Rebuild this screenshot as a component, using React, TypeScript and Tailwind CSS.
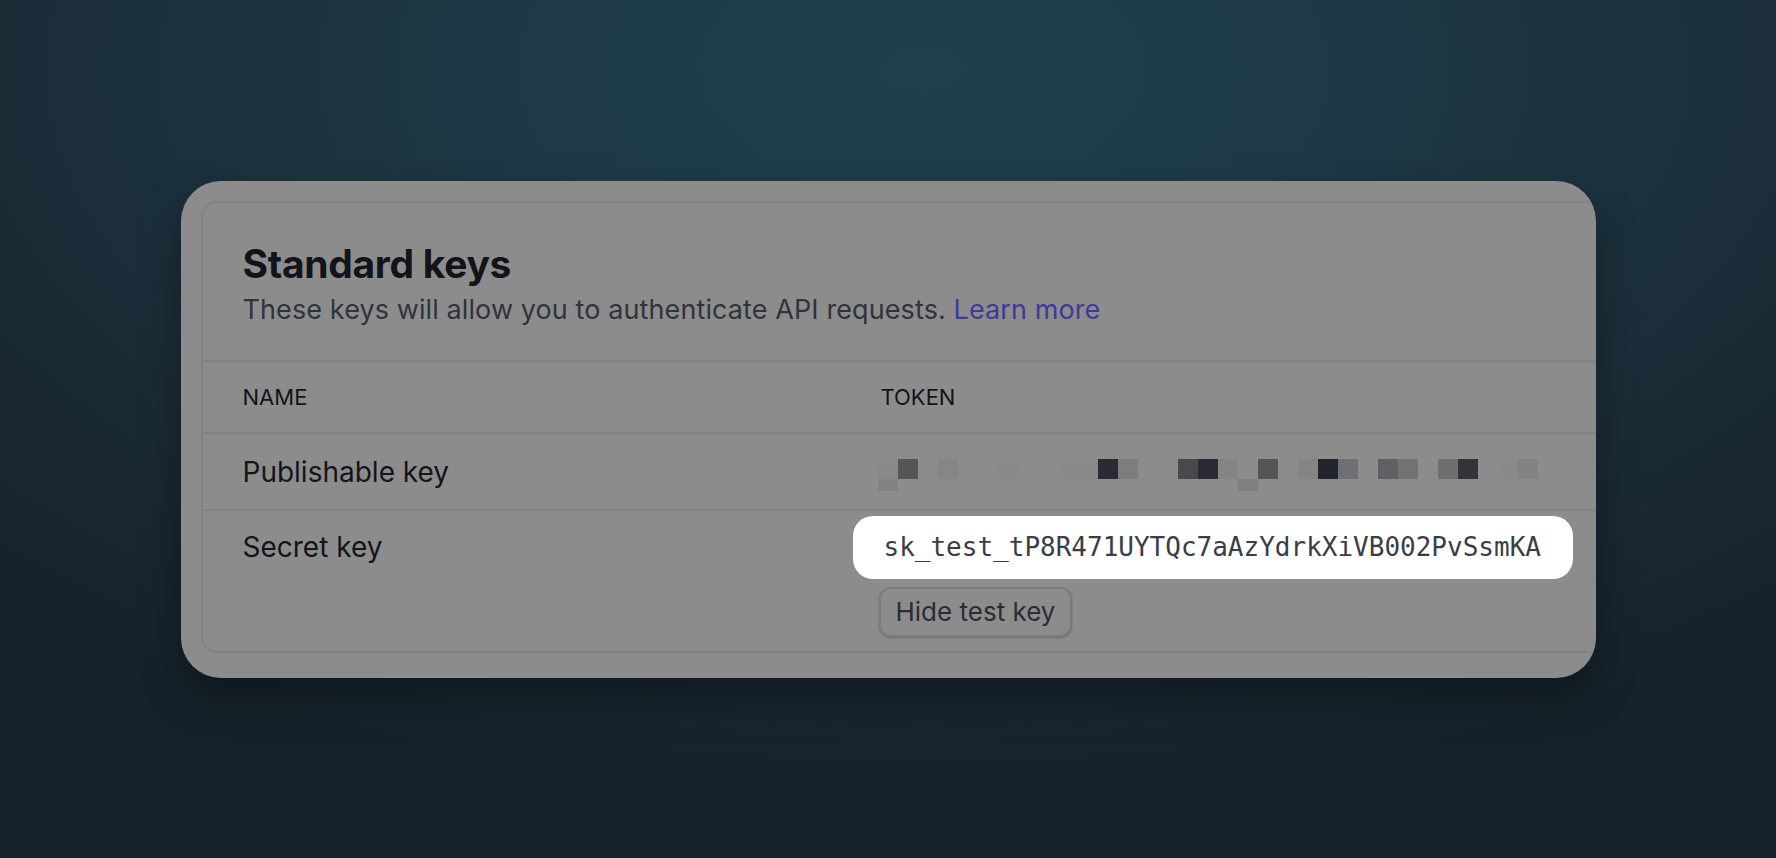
import React from "react";

const blocks: { x: number; top?: string; bottom?: string }[] = [
  { x: 0, top: "#8a8a8a", bottom: "#838383" },
  { x: 1, top: "#555657" },
  { x: 3, top: "#868686" },
  { x: 6, top: "#8a8a8a" },
  { x: 9, top: "#8a8a8a" },
  { x: 10, top: "#8a8a8a" },
  { x: 11, top: "#2a2a33" },
  { x: 12, top: "#7d7d7d" },
  { x: 15, top: "#48494d" },
  { x: 16, top: "#292a33" },
  { x: 17, top: "#858585" },
  { x: 18, bottom: "#7f7f7f" },
  { x: 19, top: "#555657" },
  { x: 21, top: "#858585" },
  { x: 22, top: "#22252d" },
  { x: 23, top: "#6f7075" },
  { x: 25, top: "#5f6064" },
  { x: 26, top: "#727274" },
  { x: 28, top: "#6f6f71" },
  { x: 29, top: "#33343a" },
  { x: 31, top: "#8a8a8a" },
  { x: 32, top: "#838383" },
];

function Pixelated() {
  const cols = Array.from({ length: 33 }, (_, i) => blocks.find((b) => b.x === i));
  return (
    <div className="flex">
      {cols.map((b, i) => (
        <div key={i} className="flex w-[20px] flex-col">
          <div className="h-[20px] w-[20px]" style={{ backgroundColor: b?.top ?? "transparent" }} />
          <div className="h-[12px] w-[20px]" style={{ backgroundColor: b?.bottom ?? "transparent" }} />
        </div>
      ))}
    </div>
  );
}

export default function App() {
  return (
    <div className="flex h-screen w-full items-center justify-center bg-[radial-gradient(ellipse_75%_85%_at_52%_8%,#1f414b_0%,#1d3844_35%,#1b2c37_70%,#16222a_100%)] font-['Inter',sans-serif]">
      <div className="h-[497px] w-[1415px] overflow-hidden rounded-[40px] bg-[#8c8c8c] pb-[25px] pl-5 pt-5 shadow-[0_20px_40px_rgba(0,0,0,0.35)]">
        <div className="flex h-full w-[1460px] flex-col rounded-[16px] border-2 border-[#838383]">
          {/* header */}
          <div className="h-[159px] shrink-0 border-b-2 border-[#838383] pl-[40px] pt-[37px]">
            <div className="text-[39px] font-bold leading-[47px] tracking-[-0.3px] text-[#13131a]">
              Standard keys
            </div>
            <div className="mt-[6px] text-[27px] leading-[33px] tracking-[0.1px] text-[#30333c]">
              These keys will allow you to authenticate API requests.{" "}
              <span className="text-[#3d3a9c]">Learn more</span>
            </div>
          </div>

          {/* table header */}
          <div className="flex h-[72px] shrink-0 items-center border-b-2 border-[#838383] pl-[40px] text-[22px] font-normal leading-[26px] text-[#14141b]">
            <div className="w-[638px]">NAME</div>
            <div>TOKEN</div>
          </div>

          {/* publishable */}
          <div className="flex h-[77px] shrink-0 border-b-2 border-[#838383] pl-[40px]">
            <div className="w-[635px] pt-[21px] text-[28px] leading-[34px] text-[#14141b]">
              Publishable key
            </div>
            <div className="pt-[25px]">
              <Pixelated />
            </div>
          </div>

          {/* secret */}
          <div className="flex flex-1 pl-[40px] pt-[5px]">
            <div className="flex h-[63px] w-[610px] items-center text-[28px] leading-[34px] text-[#14141b]">
              Secret key
            </div>
            <div className="flex flex-col items-start">
              <div className="flex h-[63px] w-[720px] items-center rounded-[20px] bg-white pl-[31px] font-['DejaVu_Sans_Mono',monospace] text-[26px] leading-[32px] text-[#3a3d48]">
                sk_test_tP8R471UYTQc7aAzYdrkXiVB002PvSsmKA
              </div>
              <button className="ml-[26px] mt-[8px] flex h-[50px] items-center rounded-[12px] border-2 border-[#7b7b7b] bg-[#8c8c8c] px-[15px] text-[26px] leading-[30px] text-[#2a2c35] shadow-[0_1px_2px_rgba(0,0,0,0.25)]">
                Hide test key
              </button>
            </div>
          </div>
        </div>
      </div>
    </div>
  );
}
